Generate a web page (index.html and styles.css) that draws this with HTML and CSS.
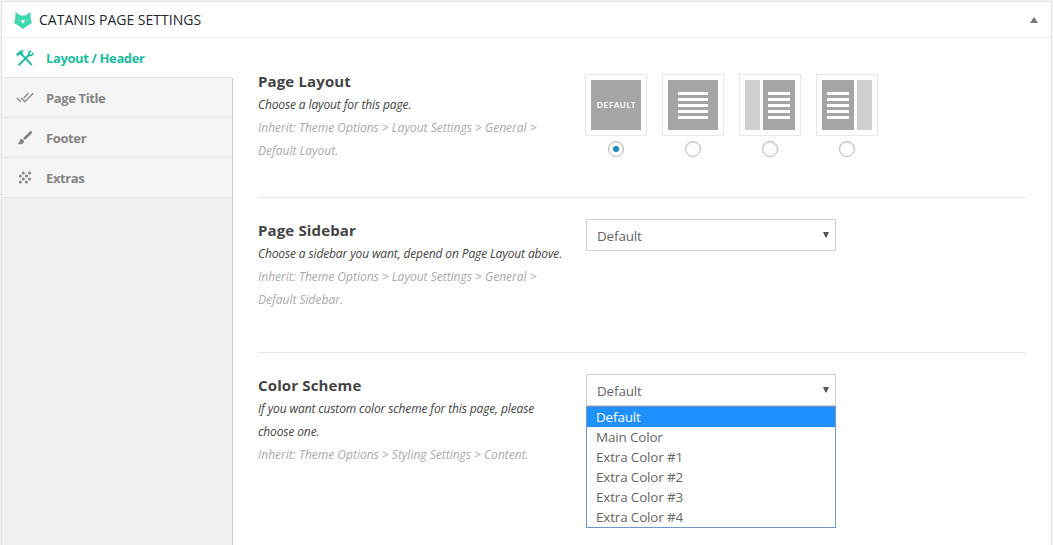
FILE: index.html
```html
<!DOCTYPE html>
<html lang="en">
<head>
<meta charset="utf-8">
<title>Catanis Page Settings</title>
<link rel="stylesheet" href="styles.css">
</head>
<body>
<div class="panel">
  <header class="panel-head">
    <svg class="logo" width="18" height="17" viewBox="0 0 18 17"><path fill="#3fd6b0" d="M1.6 0 6.4 3.6H11.6L16.4 0 16.8 7 18 11 13.8 13.6 9 17 4.2 13.6 0 11 1.2 7Z"/><path fill="#fff" d="M7 8.6Q9 7.6 11 8.6L9.8 11H8.2Z"/><path stroke="#a9ecda" stroke-width=".8" d="M4.2 7.6 6 8.6M13.8 7.6 12 8.6"/></svg>
    <h1 class="panel-title">CATANIS PAGE SETTINGS</h1>
    <svg class="toggle" width="8" height="6" viewBox="0 0 8 6"><path fill="#72777c" d="M4 0 8 6H0Z"/></svg>
  </header>
  <div class="panel-body">
    <nav class="tabs">
      <a class="tab tab-active"><svg class="tab-icon" width="18" height="16" viewBox="0 0 18 16"><path fill="currentColor" d="M0 4.8 1 3.2 3.6 1.2Q5.5 0 8 .5L6.2 2.3 7 4 5.4 5.5 3.8 4.3 1.8 6Z"/><path fill="none" stroke="currentColor" stroke-width="1.9" d="M5.4 4.2 15.8 15.2M2.6 15.2 13 5"/><path fill="none" stroke="currentColor" stroke-width="1.8" d="M15.2.9 13 2.3 12.7 5.1 15.4 5.3 17.4 3"/></svg><span class="label">Layout / Header</span></a>
      <a class="tab"><svg class="tab-icon" width="18" height="16" viewBox="0 0 18 16"><path fill="none" stroke="currentColor" stroke-width="1.3" d="M.8 7.7 4.8 11.7M4.8 7.7 8.8 11.7 17.2 3.3M7.5 8.2 12.4 3.3"/></svg><span class="label">Page Title</span></a>
      <a class="tab"><svg class="tab-icon" width="18" height="16" viewBox="0 0 18 16"><path stroke="currentColor" stroke-width="2.7" stroke-linecap="round" d="M8.9 8.2 14.8 2.5"/><path fill="currentColor" d="M5.2 8.9Q7.6 8.7 8 11.2 7.6 14.2 4.6 14.2H3Q1.9 14 2.1 12.9 3.5 13 3.6 11 3.8 9.2 5.2 8.9Z"/></svg><span class="label">Footer</span></a>
      <a class="tab"><svg class="tab-icon" width="18" height="16" viewBox="0 0 18 16"><g fill="currentColor"><circle cx="7.3" cy="3" r="1.5"/><circle cx="13.5" cy="3" r="1.5"/><circle cx="4.3" cy="6" r="1.5"/><circle cx="10.4" cy="6" r="1.5"/><circle cx="7.3" cy="9" r="1.5"/><circle cx="13.5" cy="9" r="1.5"/><circle cx="4.3" cy="12" r="1.5"/><circle cx="10.4" cy="12" r="1.5"/></g></svg><span class="label">Extras</span></a>
    </nav>
    <main class="fields">
      <section class="field field-layout">
        <div class="info">
          <h2 class="name">Page Layout</h2>
          <p class="desc">Choose a layout for this page.</p>
          <p class="hint">Inherit: Theme Options &gt; Layout Settings &gt; General &gt;<br>Default Layout.</p>
        </div>
        <div class="choices">
          <div class="choice"><div class="thumb"><div class="pane"><span class="thumb-text">DEFAULT</span></div></div><span class="radio radio-on"></span></div>
          <div class="choice"><div class="thumb"><div class="pane"><i class="lines lines-wide"></i></div></div><span class="radio"></span></div>
          <div class="choice"><div class="thumb"><div class="side"></div><div class="pane"><i class="lines"></i></div></div><span class="radio"></span></div>
          <div class="choice"><div class="thumb"><div class="pane"><i class="lines"></i></div><div class="side"></div></div><span class="radio"></span></div>
        </div>
      </section>
      <section class="field">
        <div class="info">
          <h2 class="name">Page Sidebar</h2>
          <p class="desc">Choose a sidebar you want, depend on Page Layout above.</p>
          <p class="hint">Inherit: Theme Options &gt; Layout Settings &gt; General &gt;<br>Default Sidebar.</p>
        </div>
        <div class="select"><span class="value">Default</span><svg class="caret" width="6" height="6" viewBox="0 0 6 6"><path fill="#555" d="M0 0H6L3.5 5.5H2.5Z"/></svg></div>
      </section>
      <section class="field">
        <div class="info">
          <h2 class="name">Color Scheme</h2>
          <p class="desc">If you want custom color scheme for this page, please<br>choose one.</p>
          <p class="hint">Inherit: Theme Options &gt; Styling Settings &gt; Content.</p>
        </div>
        <div class="select"><span class="value">Default</span><svg class="caret" width="6" height="6" viewBox="0 0 6 6"><path fill="#555" d="M0 0H6L3.5 5.5H2.5Z"/></svg>
          <ul class="menu">
            <li class="option option-on">Default</li>
            <li class="option">Main Color</li>
            <li class="option">Extra Color #1</li>
            <li class="option">Extra Color #2</li>
            <li class="option">Extra Color #3</li>
            <li class="option">Extra Color #4</li>
          </ul>
        </div>
      </section>
    </main>
  </div>
</div>
</body>
</html>
```

FILE: styles.css
```css
* { box-sizing: border-box; }
body {
  margin: 0;
  height: 545px;
  overflow: hidden;
  padding: 1px 1px 0;
  background: #f1f1f1;
  font-family: "Open Sans", "Noto Sans", sans-serif;
}
h1, h2, p, ul { margin: 0; padding: 0; }
.panel {
  height: 544px;
  border: 1px solid #e5e5e5;
  border-bottom: 0;
  background: #fff;
  display: flex;
  flex-direction: column;
}
.panel-head {
  height: 36px;
  flex: none;
  border-bottom: 1px solid #eee;
  display: flex;
  align-items: center;
  padding: 0 13px 0 12px;
}
.logo { flex: none; margin: 2px 7px 0 0; }
.panel-title {
  font-size: 14px;
  line-height: 20px;
  font-weight: 400;
  color: #23282d;
  white-space: nowrap;
}
.toggle { margin-left: auto; }
.panel-body { flex: 1; display: flex; min-height: 0; }
.tabs {
  width: 231px;
  flex: none;
  background: #f1f1f1;
  border-right: 1px solid;
  border-image: linear-gradient(#fff 40px, #ccc 40px) 0 1 0 0;
}
.tab {
  height: 40px;
  display: flex;
  align-items: center;
  padding-left: 14px;
  gap: 12px;
  background: #f5f5f5;
  border-bottom: 1px solid #e6e6e6;
  color: #858585;
}
.tab-active { background: #fff; color: #1abc9c; }
.tab-icon { flex: none; }
.label {
  font-size: 13px;
  font-weight: 700;
  line-height: 20px;
  letter-spacing: -0.38px;
  white-space: nowrap;
}
.fields { flex: 1; padding: 11px 25px 0; }
.field {
  height: 155px;
  padding-top: 21px;
  display: flex;
  border-bottom: 1px solid #e7e7e7;
}
.field:last-child { border-bottom: 0; }
.field-layout { height: 149px; }
.info { width: 328px; flex: none; white-space: nowrap; }
.name {
  font-size: 15px;
  line-height: 23px;
  font-weight: 700;
  color: #444;
  letter-spacing: 0.14px;
}
.desc, .hint { font-size: 12px; line-height: 23px; font-style: italic; }
.desc { color: #444; letter-spacing: -0.13px; }
.hint { color: #aaa; }
.choices { display: flex; gap: 15px; padding-top: 4px; margin-left: -1px; }
.choice { display: flex; flex-direction: column; align-items: center; gap: 5px; }
.thumb {
  width: 62px;
  height: 62px;
  padding: 5px;
  border: 1px solid #e8e8e8;
  display: flex;
  gap: 3px;
}
.pane {
  flex: 1;
  background: #a5a5a5;
  display: flex;
  align-items: center;
  justify-content: center;
}
.side { width: 15px; background: #d0d0d0; }
.thumb-text {
  font-family: Lato, sans-serif;
  font-size: 8px;
  font-weight: 700;
  line-height: 10px;
  color: #fff;
  letter-spacing: 0.75px;
  padding-left: 1px;
}
.lines {
  width: 22px;
  height: 27px;
  background: repeating-linear-gradient(#fff 0 3px, transparent 3px 6px);
}
.lines-wide { width: 30px; }
.radio {
  width: 16px;
  height: 16px;
  border: 1px solid #b4b9be;
  border-radius: 50%;
  background: #fff;
  box-shadow: inset 0 1px 2px rgba(0, 0, 0, 0.1);
}
.radio-on { background: radial-gradient(circle, #1e8cbe 2.7px, #fff 3.4px); }
.select {
  position: relative;
  width: 250px;
  height: 32px;
  border: 1px solid #d0d0d0;
  display: flex;
  align-items: center;
  justify-content: space-between;
  padding: 0 6px 0 9px;
  font-size: 13.5px;
  letter-spacing: -0.18px;
  color: #666;
}
.value { line-height: 20px; padding: 1px 0 0 1px; }
.caret { margin-bottom: 1px; }
.menu {
  position: absolute;
  left: -1px;
  top: 31px;
  width: 250px;
  border: 1px solid #7197ca;
  background: #fff;
  list-style: none;
}
.option { height: 20px; line-height: 20px; padding-left: 9px; }
.option-on { background: #1e90ff; color: #fff; }
```
